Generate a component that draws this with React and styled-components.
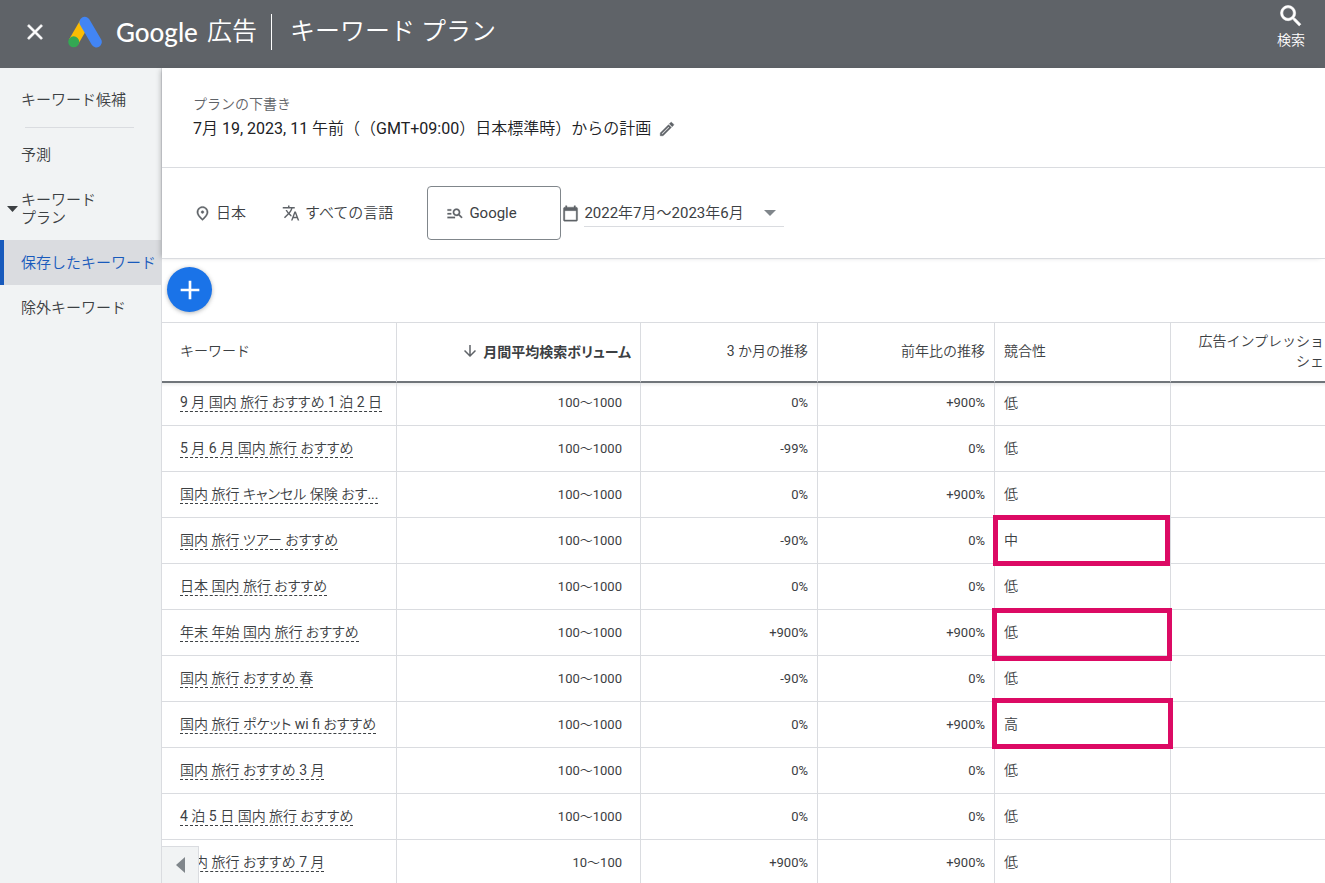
import React from "react";
import styled, { createGlobalStyle, css } from "styled-components";
import {
  MdAdd,
  MdArrowDownward,
  MdCalendarToday,
  MdClose,
  MdManageSearch,
  MdOutlineModeEdit,
  MdOutlinePlace,
  MdSearch,
  MdTranslate
} from "react-icons/md";

const GlobalStyle = createGlobalStyle`
  * {
    box-sizing: border-box;
  }
  body {
    margin: 0;
    color: #3c4043;
    background: #fff;
    font-family: Roboto, "Noto Sans CJK JP DemiLight", "Noto Sans CJK JP", sans-serif;
    font-size: 14px;
    font-weight: 400;
    text-spacing-trim: space-all;
  }
  button {
    padding: 0;
    border: 0;
    background: none;
    color: inherit;
    font: inherit;
    cursor: pointer;
  }
  a {
    color: inherit;
    text-decoration: none;
  }
  svg {
    display: block;
    flex: none;
  }
`;

const Shell = styled.div`
  display: flex;
  flex-direction: column;
  height: 100vh;
  overflow: hidden;
`;

const Icon = styled.span`
  display: flex;

  path:not([fill="none"]) {
    stroke: currentColor;
    stroke-width: ${({ $stroke }) => $stroke || 0.5};
  }
`;

const TopBar = styled.header`
  display: flex;
  align-items: center;
  flex: none;
  height: 68px;
  padding: 0 20px 4px 22px;
  color: #fff;
  background: #5f6368;
`;

const Brand = styled.a`
  display: flex;
  align-items: center;
  margin-left: 20px;
  font-size: 25px;
  line-height: 36px;
`;

const BrandName = styled.span`
  margin: 0 9px 0 14px;
  font-family: Lato, sans-serif;
  font-size: 26px;
  font-weight: 500;
`;

const PageName = styled.h1`
  margin: 0 0 0 14px;
  padding-left: 18px;
  border-left: 1px solid #fff;
  font-size: 25px;
  font-weight: 350;
  line-height: 36px;
`;

const LightText = styled.span`
  font-weight: 350;
`;

const SearchButton = styled.button`
  display: flex;
  flex-direction: column;
  align-items: center;
  align-self: flex-start;
  margin-left: auto;
  padding-top: 2px;
  line-height: 20px;
`;

const Body = styled.div`
  display: flex;
  flex: 1;
  min-height: 0;
`;

const SideNav = styled.nav`
  display: flex;
  flex-direction: column;
  flex: none;
  width: 162px;
  padding-top: 9px;
  border-right: 1px solid #dadce0;
  background: #f1f3f4;
  font-size: 15px;
  font-weight: 350;
`;

const NavLink = styled.a`
  display: flex;
  align-items: center;
  height: 45px;
  padding: 0 0 2px 17px;
  border-left: 4px solid transparent;
  white-space: nowrap;

  ${({ $active }) =>
    $active &&
    css`
      border-color: #185abc;
      color: #185abc;
      background: #dadce0;
    `}
`;

const NavDivider = styled.hr`
  width: 109px;
  height: 1px;
  margin: 5px 0 4px 25px;
  border: 0;
  background: #dadce0;
`;

const NavGroup = styled.button`
  display: flex;
  align-items: center;
  gap: 3px;
  height: 63px;
  padding-left: 7px;
  line-height: 18px;
  text-align: left;
`;

const Main = styled.main`
  position: relative;
  flex: 1;
  min-width: 0;
`;

const PlanPanel = styled.div`
  box-shadow: -3px 0 5px -2px rgba(60, 64, 67, 0.35);
`;

const PlanHead = styled.section`
  height: 100px;
  padding: 25px 31px 0;
  border-bottom: 1px solid #dadce0;
`;

const PlanLabel = styled.div`
  color: #5f6368;
  font-weight: 350;
  line-height: 22px;
`;

const PlanTitle = styled.h2`
  display: flex;
  align-items: center;
  gap: 7px;
  margin: 0;
  color: #202124;
  font-size: 16px;
  font-weight: 400;
  line-height: 28px;
`;

const Filters = styled.section`
  display: flex;
  align-items: center;
  height: 91px;
  padding-left: 32px;
  border-bottom: 1px solid #dadce0;
  font-size: 15px;
`;

const Filter = styled.button`
  display: flex;
  align-items: center;
  gap: 5px;
  margin-right: ${({ $space }) => $space || 0}px;
  font-weight: 350;
  line-height: 18px;

  svg {
    color: #5f6368;
  }
`;

const NetworkFilter = styled.button`
  display: flex;
  align-items: center;
  gap: 5px;
  width: 134px;
  height: 54px;
  padding-left: 18px;
  border: 1px solid #80868b;
  border-radius: 4px;
`;

const DateFilter = styled.button`
  display: flex;
  align-items: center;
  gap: 5px;
  margin-left: 1px;
`;

const DateValue = styled.span`
  display: flex;
  align-items: center;
  justify-content: space-between;
  width: 200px;
  height: 28px;
  padding: 0 8px 0 0;
  border-bottom: 1px solid #dadce0;
  line-height: 18px;
`;

const Actions = styled.div`
  height: 63px;
  padding: 8px 5px;
`;

const AddButton = styled.button`
  display: flex;
  align-items: center;
  justify-content: center;
  width: 45px;
  height: 45px;
  border-radius: 50%;
  color: #fff;
  background: #1a73e8;
  box-shadow: 0 1px 4px rgba(60, 64, 67, 0.4);
`;

const Table = styled.table`
  width: 100%;
  table-layout: fixed;
  border-spacing: 0;

  th:last-child,
  td:last-child {
    border-right: 0;
  }
`;

const HeadCell = styled.th`
  height: 61px;
  padding: 0 ${({ $last }) => ($last ? 1 : 9)}px 3px
    ${({ $first }) => ($first ? 18 : 9)}px;
  border: solid #dadce0;
  border-width: 1px 1px 2px 0;
  border-bottom-color: #70757a;
  font-weight: ${({ $sorted }) => ($sorted ? 700 : 400)};
  line-height: 20px;
  text-align: ${({ $align }) => $align || "left"};
  white-space: pre-line;
`;

const SortLabel = styled.button`
  display: inline-flex;
  align-items: center;
  gap: 4px;
  font-family: "Noto Sans CJK JP", sans-serif;
  font-feature-settings: "palt";
  vertical-align: middle;
`;

const Cell = styled.td`
  position: relative;
  height: 46px;
  padding: 0 ${({ $wide }) => ($wide ? 18 : 9)}px 0 9px;
  border: solid #dadce0;
  border-width: 0 1px 1px 0;
  font-size: 13px;
  line-height: 18px;
  text-align: ${({ $align }) => $align || "left"};
  white-space: nowrap;
`;

const KeywordCell = styled(Cell)`
  padding-left: 18px;
  font-size: 14px;
`;

const LevelCell = styled(Cell)`
  padding-bottom: 2px;
  font-size: 14px;
`;

const Row = styled.tr`
  &:first-child td {
    height: 43px;
    padding-bottom: 3px;
    background: linear-gradient(#eceded, #fff 4px);
  }
`;

const Keyword = styled.a`
  display: inline-block;
  border-bottom: 1px dashed #3c4043;
  font-feature-settings: "palt";
  line-height: 17px;
`;

const Marker = styled.span`
  position: absolute;
  z-index: 1;
  inset: ${({ $inset }) => $inset};
  border: 5px solid #dc0a64;
  pointer-events: none;
`;

const ScrollButton = styled.button`
  position: absolute;
  bottom: 0;
  left: 0;
  display: flex;
  align-items: center;
  justify-content: center;
  width: 37px;
  height: 37px;
  border: solid #dadce0;
  border-width: 1px 1px 0 0;
  background: #f1f3f4;
`;

const AdsLogo = () => (
  <svg width="34" height="32" viewBox="0 0 34 32" aria-hidden="true">
    <path d="M16.8 6.5 5.5 26" stroke="#fbbc04" strokeWidth="10.4" />
    <path
      d="M16.8 6.2 28.4 26"
      stroke="#4285f4"
      strokeWidth="10.8"
      strokeLinecap="round"
    />
    <circle cx="5.7" cy="25.8" r="5.5" fill="#34a853" />
  </svg>
);

const rows = [
  ["9 月 国内 旅行 おすすめ 1 泊 2 日", "100～1000", "0%", "+900%", "低"],
  ["5 月 6 月 国内 旅行 おすすめ", "100～1000", "-99%", "0%", "低"],
  ["国内 旅行 キャンセル 保険 おす...", "100～1000", "0%", "+900%", "低"],
  ["国内 旅行 ツアー おすすめ", "100～1000", "-90%", "0%", "中", "-3px 0 -3px -2px"],
  ["日本 国内 旅行 おすすめ", "100～1000", "0%", "0%", "低"],
  ["年末 年始 国内 旅行 おすすめ", "100～1000", "+900%", "+900%", "低", "-2px -2px -6px -3px"],
  ["国内 旅行 おすすめ 春", "100～1000", "-90%", "0%", "低"],
  ["国内 旅行 ポケット wi fi おすすめ", "100～1000", "0%", "+900%", "高", "-4px -3px -2px -3px"],
  ["国内 旅行 おすすめ 3 月", "100～1000", "0%", "0%", "低"],
  ["4 泊 5 日 国内 旅行 おすすめ", "100～1000", "0%", "0%", "低"],
  ["国内 旅行 おすすめ 7 月", "10～100", "+900%", "+900%", "低"]
];

const KeywordTable = () => (
  <Table>
    <colgroup>
      <col style={{ width: 235 }} />
      <col style={{ width: 244 }} />
      <col style={{ width: 177 }} />
      <col style={{ width: 177 }} />
      <col style={{ width: 176 }} />
      <col />
    </colgroup>
    <thead>
      <tr>
        <HeadCell $first>
          <LightText>キーワード</LightText>
        </HeadCell>
        <HeadCell $align="right" $sorted>
          <SortLabel>
            <MdArrowDownward size={18} color="#5f6368" />
            月間平均検索ボリューム
          </SortLabel>
        </HeadCell>
        <HeadCell $align="right">3 か月の推移</HeadCell>
        <HeadCell $align="right">前年比の推移</HeadCell>
        <HeadCell>競合性</HeadCell>
        <HeadCell $align="right" $last>
          {"広告インプレッショ\nシェ"}
        </HeadCell>
      </tr>
    </thead>
    <tbody>
      {rows.map(([keyword, volume, quarter, year, level, marker]) => (
        <Row key={keyword}>
          <KeywordCell>
            <Keyword href="#">{keyword}</Keyword>
          </KeywordCell>
          <Cell $align="right" $wide>
            {volume}
          </Cell>
          <Cell $align="right">{quarter}</Cell>
          <Cell $align="right">{year}</Cell>
          <LevelCell>
            {level}
            {marker && <Marker $inset={marker} />}
          </LevelCell>
          <Cell />
        </Row>
      ))}
    </tbody>
  </Table>
);

const App = () => (
  <Shell>
    <GlobalStyle />
    <TopBar>
      <button aria-label="閉じる">
        <Icon>
          <MdClose size={26} />
        </Icon>
      </button>
      <Brand href="#">
        <AdsLogo />
        <BrandName>Google</BrandName>
        <LightText>広告</LightText>
      </Brand>
      <PageName>キーワード プラン</PageName>
      <SearchButton>
        <Icon>
          <MdSearch size={28} />
        </Icon>
        検索
      </SearchButton>
    </TopBar>
    <Body>
      <SideNav>
        <NavLink href="#">キーワード候補</NavLink>
        <NavDivider />
        <NavLink href="#">予測</NavLink>
        <NavGroup>
          <svg width="11" height="6" viewBox="0 0 11 6" aria-hidden="true">
            <path d="M0 0h11L5.5 6z" fill="#3c4043" />
          </svg>
          <span>
            キーワード
            <br />
            プラン
          </span>
        </NavGroup>
        <NavLink href="#" $active>
          保存したキーワード
        </NavLink>
        <NavLink href="#">除外キーワード</NavLink>
      </SideNav>
      <Main>
        <PlanPanel>
          <PlanHead>
            <PlanLabel>プランの下書き</PlanLabel>
            <PlanTitle>
              7月 19, 2023, 11 午前（（GMT+09:00）日本標準時）からの計画
              <button aria-label="名前を編集">
                <Icon $stroke={0.6}>
                  <MdOutlineModeEdit size={18} color="#5f6368" />
                </Icon>
              </button>
            </PlanTitle>
          </PlanHead>
          <Filters>
            <Filter $space={36}>
              <Icon>
                <MdOutlinePlace size={17} />
              </Icon>
              日本
            </Filter>
            <Filter $space={34}>
              <MdTranslate size={18} />
              すべての言語
            </Filter>
            <NetworkFilter>
              <Icon $stroke={0.3}>
                <MdManageSearch size={18} color="#5f6368" />
              </Icon>
              Google
            </NetworkFilter>
            <DateFilter>
              <Icon>
                <MdCalendarToday size={17} color="#5f6368" />
              </Icon>
              <DateValue>
                2022年7月～2023年6月
                <svg width="12" height="6" viewBox="0 0 12 6" aria-hidden="true">
                  <path d="M0 0h12L6 6z" fill="#80868b" />
                </svg>
              </DateValue>
            </DateFilter>
          </Filters>
        </PlanPanel>
        <Actions>
          <AddButton aria-label="キーワードを追加">
            <MdAdd size={32} />
          </AddButton>
        </Actions>
        <KeywordTable />
        <ScrollButton aria-label="左へスクロール">
          <svg width="9" height="16" viewBox="0 0 9 16" aria-hidden="true">
            <path d="M9 0v16L0 8z" fill="#80868b" />
          </svg>
        </ScrollButton>
      </Main>
    </Body>
  </Shell>
);

export default App;
